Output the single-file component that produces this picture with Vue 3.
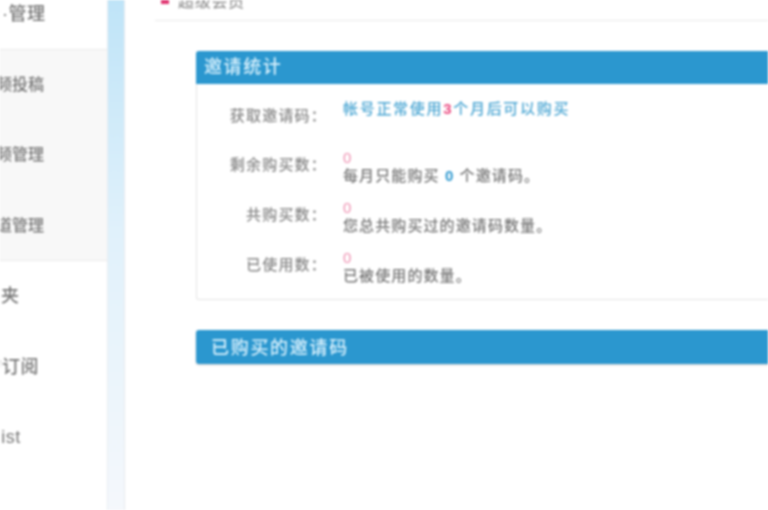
<template>
  <div class="page">
    <aside class="sidebar">
      <div class="side-item top first" :style="{ marginLeft: '-35px' }">后台·管理</div>
      <div class="side-group">
        <div class="side-item sub" v-for="item in subItems" :key="item.name" :style="{ marginLeft: item.left + 'px' }">{{ item.name }}</div>
      </div>
      <div class="side-item top" v-for="item in items" :key="item.name" :style="{ marginLeft: item.left + 'px' }">{{ item.name }}</div>
    </aside>
    <div class="strip"></div>
    <main class="main">
      <div class="title-bar">
        <i class="bullet"></i>
        <span>超级会员</span>
      </div>

      <section class="panel">
        <h3 class="panel-title first">邀请统计</h3>
        <div class="panel-body">
          <div class="row" v-for="row in rows" :key="row.label">
            <div class="label">{{ row.label }}：</div>
            <div class="value" v-if="row.buy">
              <span class="link">帐号正常使用<em>3</em>个月后可以购买</span>
            </div>
            <div class="value" v-else>
              <div class="num">0</div>
              <div v-if="row.limit">每月只能购买 <b>0</b> 个邀请码。</div>
              <div v-else>{{ row.text }}</div>
            </div>
          </div>
        </div>
      </section>

      <h3 class="panel-title second">已购买的邀请码</h3>
    </main>
  </div>
</template>

<script setup>
const subItems = [
  { name: '视频投稿', left: -20 },
  { name: '视频管理', left: -20 },
  { name: '频道管理', left: -20 }
]

const items = [
  { name: '收藏夹', left: -36 },
  { name: '我的订阅', left: -35 },
  { name: 'Watchlist', left: -56 }
]

const rows = [
  { label: '获取邀请码', buy: true },
  { label: '剩余购买数', limit: true },
  { label: '共购买数', text: '您总共购买过的邀请码数量。' },
  { label: '已使用数', text: '已被使用的数量。' }
]
</script>

<style>
html, body { margin: 0; background: #fff; overflow: hidden; }
</style>

<style scoped>
.page {
  display: flex; width: 768px; height: 510px; overflow: hidden; background: #fff;
  font-family: "Liberation Sans", "Noto Sans CJK SC", sans-serif; color: #666;
  filter: blur(0.8px);
}
.sidebar {
  flex: 0 0 107px; margin-top: -22px; border-right: 1px solid #e8edf2; overflow: hidden; white-space: nowrap;
}
.side-item { height: 70.5px; line-height: 70px; }
.side-item.first { line-height: 72px; }
.side-item.top { font-size: 18px; letter-spacing: 0.5px; color: #777; font-weight: 500; }
.side-item.sub { font-size: 16px; color: #7a7a7a; font-weight: 500; line-height: 69px; }
.side-group { background: #f8f8f8; border-top: 1px solid #eaeaea; border-bottom: 1px solid #eaeaea; height: 210.5px; }
.strip {
  flex: 0 0 16px; background: linear-gradient(180deg, #bfe4f8 0%, #e0f1fb 45%, #f5f8fc 100%);
  border-right: 1px solid #e6e9ee;
}
.main { flex: 1; min-width: 0; padding-left: 30px; overflow: hidden; }
.title-bar {
  display: flex; align-items: center; gap: 9px; width: 700px; height: 41px; margin-top: -20px; padding-left: 6px;
  border-bottom: 1px solid #e9e9e9; font-size: 16px; letter-spacing: 0.7px; color: #888; box-sizing: border-box;
}
.bullet { width: 8px; height: 8px; background: #e0336f; }
.panel { width: 640px; margin: 30px 0 0 41px; border: 1px solid #e4e4e4; border-top: 0; border-radius: 3px; }
.panel-title {
  height: 33px; line-height: 32px; margin: 0; background: #2b97cf; color: #d9f1fd;
  font-size: 18px; font-weight: 500; letter-spacing: 1.6px; border-radius: 3px 3px 0 0;
}
.panel-title.first { margin-left: -1px; padding-left: 8px; }
.panel-title.second {
  width: 640px; height: 34px; margin: 30px 0 0 41px; padding-left: 15px; line-height: 36px;
  border-radius: 3px; box-shadow: 0 1px 2px rgba(0,0,0,0.2); letter-spacing: 1.7px;
}
.panel-body { display: grid; row-gap: 13px; padding: 16px 0 13px; }
.row {
  display: grid; grid-template-columns: 122px 1fr; column-gap: 24px; min-height: 37px;
  font-size: 15px; line-height: 18px; font-weight: 500;
}
.row:first-child { min-height: 36px; }
.label { margin-right: -8px; padding-top: 7px; text-align: right; color: #888; letter-spacing: 1.2px; }
.value { letter-spacing: 1.1px; color: #777; }
.link { color: #4ba6d3; letter-spacing: 1.7px; }
.link em { color: #ea4a80; font-style: normal; font-weight: 700; }
.num { color: #ef8fb0; }
.value b { color: #2b97cf; }
</style>
